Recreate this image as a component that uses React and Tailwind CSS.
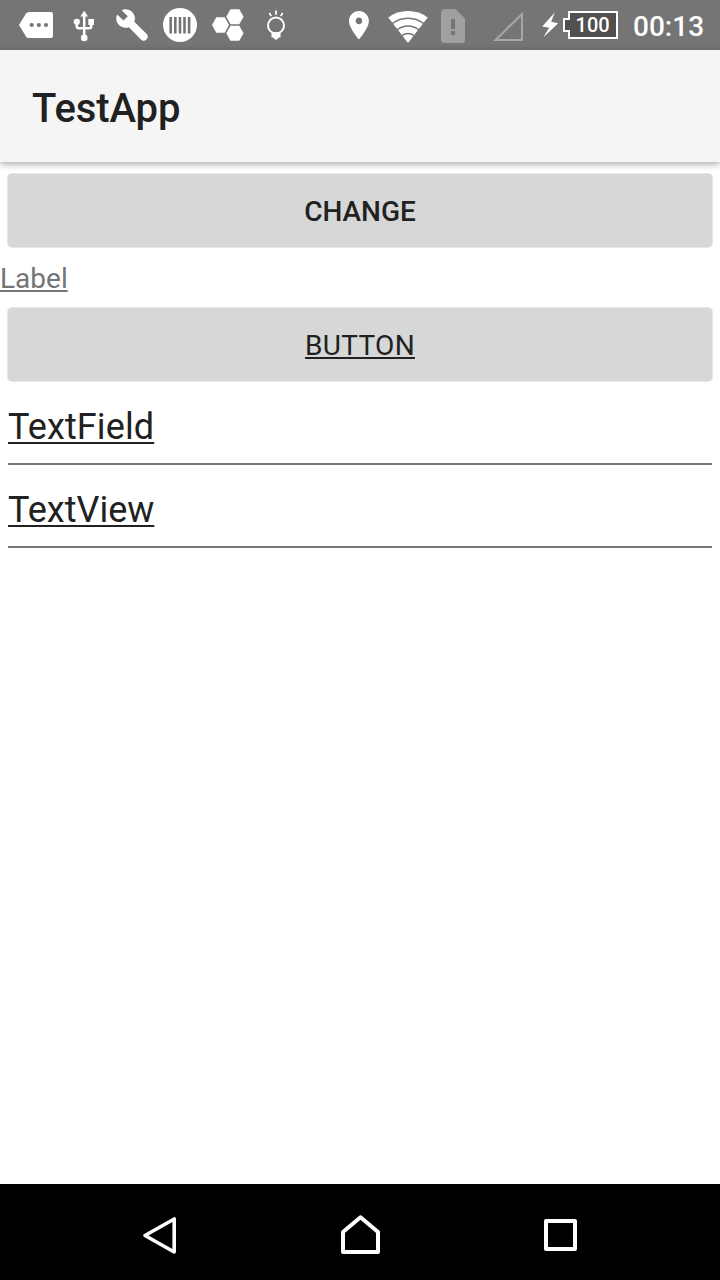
import React from "react";

function StatusIcons() {
  return (
    <>
      <svg className="ml-3 h-[50px] w-12 shrink-0" viewBox="12 0 48 50" fill="#fff">
        <path d="M19 25 L26 13.5 Q27 12 29 12 H51 Q53 12 53 14 V36 Q53 38 51 38 H29 Q27 38 26 36.5 Z" />
        <g fill="#757575">
          <circle cx="31.7" cy="25" r="2.1" />
          <circle cx="38.9" cy="25" r="2.1" />
          <circle cx="46" cy="25" r="2.1" />
        </g>
      </svg>
      <svg className="h-[50px] w-12 shrink-0" viewBox="60 0 48 50" fill="#fff">
        <path d="M84.2 10.8 L88 16.5 H80.4 Z" />
        <path d="M84.2 14 V38 M76.8 22 V26.3 Q76.8 28.3 78.8 28.3 H89.2 Q91.2 28.3 91.2 26.3 V22" fill="none" stroke="#fff" strokeWidth="2.5" />
        <circle cx="76.8" cy="21.8" r="3.1" />
        <circle cx="84.2" cy="37.9" r="3.3" />
        <path d="M88.3 19 H94 V25 H88.3 Z" />
      </svg>
      <svg className="h-[50px] w-12 shrink-0" viewBox="108 0 48 50" fill="#fff">
        <path transform="translate(114.9 7.7) scale(1.43)" d="M22.1 18.3l-8.5-8.4c.9-2.3.4-5-1.5-6.9-2-2-5-2.4-7.4-1.3L9 6 6 9 1.6 4.7C.4 7.1.9 10.1 2.9 12.1c1.9 1.9 4.6 2.4 6.9 1.5l8.4 8.6a2.72 2.72 0 0 0 3.9-3.9z" />
      </svg>
      <svg className="h-[50px] w-12 shrink-0" viewBox="156 0 48 50" fill="#fff">
        <circle cx="180" cy="25" r="17" />
        <path d="M170.7 17 V33.5 M175.3 17 V33.5 M180 17 V33.5 M184.5 17 V33.5 M189.1 17 V33.5" stroke="#757575" strokeWidth="2.6" />
      </svg>
      <svg className="h-[50px] w-12 shrink-0" viewBox="204 0 48 50" fill="#fff">
        <path d="M212 25 L216.3 17.2 H224.8 L229 25 L224.8 32.8 H216.3 Z" />
        <path d="M226.3 16.7 L230.5 9.2 H239.3 L243.6 16.7 L239.3 24.3 H230.5 Z" />
        <path d="M226.3 33.3 L230.5 25.7 H239.3 L243.6 33.3 L239.3 40.8 H230.5 Z" />
      </svg>
      <svg className="h-[50px] w-12 shrink-0" viewBox="252 0 48 50" fill="#fff">
        <circle cx="276" cy="25.5" r="8" fill="none" stroke="#fff" strokeWidth="2" />
        <path d="M271.5 32.2 H280.5 V37.6 H278.7 Q278 39.7 276 39.7 Q274 39.7 273.3 37.6 H271.5 Z" />
        <path d="M269.4 12.8 L271.2 16.2 M276 10.6 V14.8 M282.6 12.8 L280.8 16.2" stroke="#fff" strokeWidth="1.8" />
      </svg>
      <svg className="ml-9 h-[50px] w-[46px] shrink-0" viewBox="336 0 46 50" fill="#fff">
        <path transform="translate(341.9 8.1) scale(1.42)" d="M12 2C8.13 2 5 5.13 5 9c0 5.25 7 13 7 13s7-7.75 7-13c0-3.87-3.13-7-7-7zm0 9.3c-1.3 0-2.3-1-2.3-2.3s1-2.3 2.3-2.3 2.3 1 2.3 2.3-1 2.3-2.3 2.3z" />
      </svg>
      <svg className="h-[50px] w-[52px] shrink-0" viewBox="382 0 52 50" fill="#fff">
        <path d="M408 43 L388.3 17.4 Q397 11 408 11 Q419 11 427.7 17.4 Z" />
        <g fill="none" stroke="#757575" strokeWidth="1.5">
          <path d="M391 24.6 Q398.5 18.3 408 18.3 Q417.5 18.3 425 24.6" />
          <path d="M396 30.6 Q401.4 25.9 408 25.9 Q414.6 25.9 420 30.6" />
          <path d="M400.5 36.5 Q404 33.5 408 33.5 Q412 33.5 415.5 36.5" />
        </g>
      </svg>
      <svg className="h-[50px] w-[46px] shrink-0" viewBox="434 0 46 50" fill="#a0a0a0">
        <path d="M444.5 9 H455.5 L465 18.5 V39.5 Q465 43 461.5 43 H444.5 Q441 43 441 39.5 V12.5 Q441 9 444.5 9 Z" />
        <path d="M451 19 H455 V29 H451 Z M451 31 H455 V35 H451 Z" fill="#757575" />
      </svg>
      <svg className="h-[50px] w-[50px] shrink-0" viewBox="480 0 50 50" fill="none">
        <path d="M495.5 40 H522 V14 Z" stroke="#a6a6a6" strokeWidth="2" />
      </svg>
      <svg className="h-[50px] w-[30px] shrink-0" viewBox="530 0 30 50" fill="#fff">
        <path d="M554.8 12.5 L542.2 26.5 L549.2 27.8 L543.2 37.5 L558.2 23.2 L551.2 21.8 Z" />
      </svg>
      <svg className="h-[50px] w-[62px] shrink-0" viewBox="560 0 62 50">
        <path d="M569 12 H617 V38 H569 V31 H564 V19 H569 Z" fill="#505050" stroke="#fff" strokeWidth="2" />
        <text x="592.6" y="32" textAnchor="middle" fill="#fff" className="font-[Roboto] text-[20px] font-medium">100</text>
      </svg>
    </>
  );
}

function Button({ children, className }) {
  return (
    <button className={"mx-2 block h-[73px] rounded-[4px] bg-[#d6d7d7] pt-px text-center text-[28px] leading-[73px] text-[#212121] shadow-[0_0_0_1px_#e8e8e8] " + className}>
      {children}
    </button>
  );
}

function Field({ children, className }) {
  return (
    <div className={"mx-2 h-[60px] border-b-2 border-[#757575] pt-px text-[36px] leading-[42px] text-[#212121] " + className}>
      <span className="underline decoration-2 underline-offset-[3px] [text-decoration-skip-ink:none]">{children}</span>
    </div>
  );
}

export default function App() {
  return (
    <div className="flex h-[1280px] w-[720px] flex-col overflow-hidden bg-white font-[Roboto,sans-serif]">
      <header className="flex h-[50px] shrink-0 items-center bg-[#757575]">
        <StatusIcons />
        <span className="ml-[11px] pt-[4px] text-[28px] leading-[50px] font-medium text-white">00:13</span>
      </header>
      <div className="z-10 h-28 shrink-0 bg-[#f5f5f5] pl-8 shadow-[0_2px_7px_rgba(0,0,0,0.36)]">
        <h1 className="pt-[5px] text-[40px] leading-[108px] font-medium tracking-[-0.1px] text-[#212121]">TestApp</h1>
      </div>
      <main className="flex flex-1 flex-col pt-3">
        <Button className="font-medium">CHANGE</Button>
        <div className="mt-[11px] h-[50px] pt-px text-[28px] leading-[40px] text-[#757575]">
          <span className="underline decoration-2 underline-offset-[2px] [text-decoration-skip-ink:none]">Label</span>
        </div>
        <Button className="font-normal">
          <span className="tracking-[0.3px] underline decoration-2 underline-offset-[2px] [text-decoration-skip-ink:none]">BUTTON</span>
        </Button>
        <Field className="mt-[24px] tracking-[0.1px]">TextField</Field>
        <Field className="mt-[23px]">TextView</Field>
      </main>
      <nav className="flex h-24 shrink-0 items-center bg-black">
        <svg className="ml-[140px] h-24 w-10" viewBox="140 1184 40 96" fill="none" stroke="#fff" strokeWidth="3.6" strokeLinejoin="round">
          <path d="M145 1235.5 L174.2 1219 V1252 Z" />
        </svg>
        <svg className="ml-[160px] h-24 w-10" viewBox="340 1184 40 96" fill="none" stroke="#fff" strokeWidth="4" strokeLinejoin="round">
          <path d="M343 1252 V1232 L360.5 1217.3 L378 1232 V1252 Z" />
        </svg>
        <svg className="ml-[160px] h-24 w-10" viewBox="540 1184 40 96" fill="none" stroke="#fff" strokeWidth="4" strokeLinejoin="round">
          <path d="M546 1221 H575 V1249 H546 Z" />
        </svg>
      </nav>
    </div>
  );
}
